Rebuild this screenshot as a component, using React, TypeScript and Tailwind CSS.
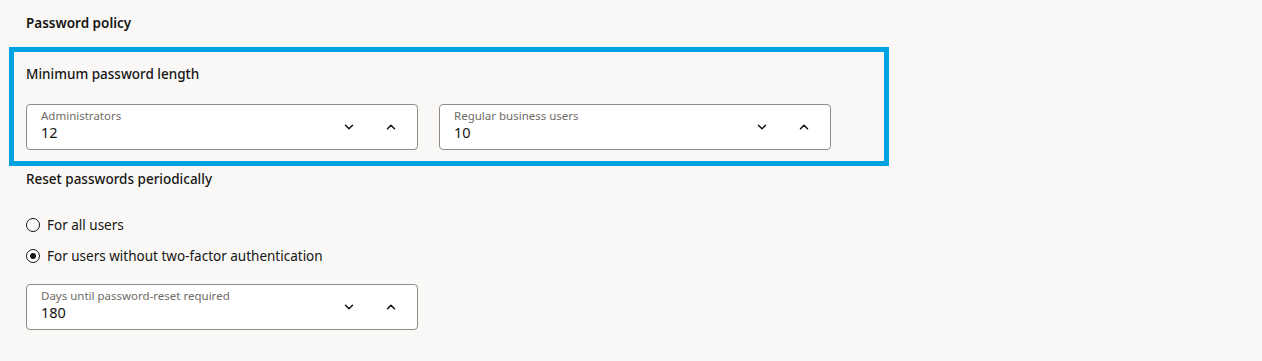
import { ChevronDown, ChevronUp } from 'lucide-react';

interface StepperProps {
  label: string;
  value: string;
}

const Stepper = ({ label, value }: StepperProps) => (
  <div className="flex h-[46px] w-[392px] items-center rounded-[4px] border border-[#8f8c88] bg-white pl-[14px] pr-[19px]">
    <div className="flex h-full flex-1 flex-col pt-[4px]">
      <span className="text-[11.5px] leading-[14px] text-[#6f6b66]">{label}</span>
      <span className="text-[14.5px] leading-[18px] text-[#161513]">{value}</span>
    </div>
    <div className="flex items-center gap-[28px] text-[#161513]">
      <ChevronDown className="h-[14px] w-[14px]" strokeWidth={2.6} />
      <ChevronUp className="h-[14px] w-[14px]" strokeWidth={2.6} />
    </div>
  </div>
);

const Radio = ({ label, checked }: { label: string; checked?: boolean }) => (
  <label className="flex items-center gap-[7px] text-[13.5px] text-[#161513]">
    <span className="flex h-[14px] w-[14px] items-center justify-center rounded-full border border-[#161513] bg-white">
      {checked && <span className="h-[6px] w-[6px] rounded-full bg-[#161513]" />}
    </span>
    {label}
  </label>
);

export default function App() {
  return (
    <div className="h-[361px] w-full bg-[#f9f8f6] font-['Noto_Sans',sans-serif] text-[#161513]">
      <div className="pl-[26px] pt-[13px] text-[13.5px] font-semibold leading-[20px]">Password policy</div>

      <div className="ml-[9px] mt-[14px] w-[880px] border-[5px] border-[#00a3e1] pb-[11px] pl-[12px] pt-[12px]">
        <div className="text-[13.5px] font-medium leading-[20px]">Minimum password length</div>
        <div className="mt-[20px] flex gap-[21px]">
          <Stepper label="Administrators" value="12" />
          <Stepper label="Regular business users" value="10" />
        </div>
      </div>

      <div className="pl-[26px]">
        <div className="mt-[3px] text-[13.5px] font-medium leading-[20px]">Reset passwords periodically</div>
        <div className="mt-[26px] flex flex-col gap-[11px]">
          <Radio label="For all users" />
          <Radio label="For users without two-factor authentication" checked />
        </div>
        <div className="mt-[17px]">
          <Stepper label="Days until password-reset required" value="180" />
        </div>
      </div>
    </div>
  );
}
